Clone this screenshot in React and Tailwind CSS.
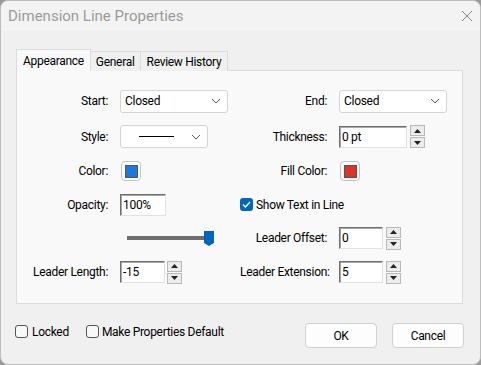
import React from "react";

const font = { fontFamily: 'Roboto, "Noto Sans", sans-serif' };
const T = "text-[12px] tracking-[-0.3px] text-black";

function Chevron() {
  return (
    <svg width="10" height="6" viewBox="0 0 10 6" className="shrink-0">
      <path d="M1 1 L5 5 L9 1" fill="none" stroke="#555" strokeWidth="1" />
    </svg>
  );
}

function Select({ w, children }) {
  return (
    <div className={`${w} h-[23px] bg-white border border-[#d4d4d4] rounded-[3px] flex items-center justify-between pl-[4px] pr-[6px]`}>
      <div className="flex-1 flex items-center">{children}</div>
      <Chevron />
    </div>
  );
}

function Input({ w, value }) {
  return (
    <div className={`${w} h-[22px] bg-white border border-t-[#6e6e6e] border-l-[#6e6e6e] border-r-[#e2e2e2] border-b-[#e2e2e2] shadow-[inset_1px_1px_0_#a8a8a8] flex items-center pl-[2px] ${T}`}>
      {value}
    </div>
  );
}

function Spinner() {
  return (
    <div className="w-[15px] h-[23px] flex flex-col gap-px">
      <div className="flex-1 bg-[#ececec] border border-[#b9b9b9] flex items-center justify-center">
        <svg width="7" height="4" viewBox="0 0 7 4"><path d="M3.5 0 L7 4 L0 4 Z" fill="#222" /></svg>
      </div>
      <div className="flex-1 bg-[#ececec] border border-[#b9b9b9] flex items-center justify-center">
        <svg width="7" height="4" viewBox="0 0 7 4"><path d="M0 0 L7 0 L3.5 4 Z" fill="#222" /></svg>
      </div>
    </div>
  );
}

function Swatch({ color }) {
  return (
    <div className="w-[20px] h-[20px] border border-[#c4c4c4] rounded-[4px] bg-[#fbfbfb] flex items-center justify-center">
      <div className="w-[13px] h-[13px] border border-[#555]" style={{ backgroundColor: color }} />
    </div>
  );
}

function Label({ children }) {
  return <div className={`text-right pr-3 whitespace-nowrap ${T}`}>{children}</div>;
}

function CheckBox({ checked }) {
  if (checked) {
    return (
      <div className="w-[13px] h-[13px] rounded-[3px] bg-[#0067c0] flex items-center justify-center">
        <svg width="9" height="7" viewBox="0 0 9 7"><path d="M1 3.5 L3.4 6 L8 1" fill="none" stroke="white" strokeWidth="1.3" /></svg>
      </div>
    );
  }
  return <div className="w-[13px] h-[13px] rounded-[3px] border border-[#555] bg-[#f8f8f8]" />;
}

export default function App() {
  return (
    <div className="w-[481px] h-[365px] bg-[#9a9a9a] overflow-hidden" style={font}>
      <div className="w-[481px] h-[365px] bg-[#f0f0f0] rounded-[8px] border border-[#bdbdbd] overflow-hidden flex flex-col">
        {/* Title bar */}
        <div className="h-[30px] bg-[#f3f3f3] flex items-center justify-between pl-[7px] pr-[7px] shrink-0">
          <div className="text-[15px] text-[#9b9b9b]">Dimension Line Properties</div>
          <svg width="12" height="12" viewBox="0 0 12 12"><path d="M1 1 L11 11 M11 1 L1 11" stroke="#8a8a8a" strokeWidth="1" /></svg>
        </div>

        {/* Tabs */}
        <div className="pl-[15px] pt-[18px] flex items-end relative z-10 h-[40px]">
          <div className={`h-[22px] px-[6px] bg-[#f9f9f9] border border-[#dcdcdc] border-b-0 flex items-center ${T}`}>Appearance</div>
          <div className={`h-[20px] px-[5px] bg-[#f0f0f0] border border-[#dcdcdc] border-l-0 border-b-0 flex items-center ${T}`}>General</div>
          <div className={`h-[20px] px-[6px] bg-[#f0f0f0] border border-[#dcdcdc] border-l-0 border-b-0 flex items-center ${T}`}>Review History</div>
        </div>

        {/* Panel */}
        <div className="ml-[15px] w-[447px] h-[234px] -mt-px border border-[#dcdcdc] bg-[#f9f9f9] pt-[12px]">
          <div className="grid grid-cols-[103px_120px_99px_1fr] grid-rows-[36px_35px_34px_33px_34px_34px] items-center">
            <Label>Start:</Label>
            <Select w="w-[108px]"><span className={T}>Closed</span></Select>
            <Label>End:</Label>
            <Select w="w-[108px]"><span className={T}>Closed</span></Select>

            <Label>Style:</Label>
            <Select w="w-[88px]"><div className="ml-[14px] w-[35px] h-px bg-black" /></Select>
            <Label>Thickness:</Label>
            <div className="flex items-center gap-[3px]">
              <Input w="w-[68px]" value="0 pt" />
              <Spinner />
            </div>

            <Label>Color:</Label>
            <div className="ml-px"><Swatch color="#1a78e0" /></div>
            <Label>Fill Color:</Label>
            <div className="ml-px"><Swatch color="#dc3526" /></div>

            <Label>Opacity:</Label>
            <Input w="w-[46px]" value="100%" />
            <div className="col-span-2 flex items-center gap-[3px]">
              <CheckBox checked />
              <span className={T}>Show Text in Line</span>
            </div>

            <div />
            <div className="ml-[7px]">
              <svg width="88" height="15" viewBox="0 0 88 15">
                <rect x="0" y="5" width="80" height="4" fill="#6f6f6f" />
                <path d="M77 0 H87 V12 L82 15 L77 12 Z" fill="#0067c0" />
              </svg>
            </div>
            <Label>Leader Offset:</Label>
            <div className="flex items-center gap-[3px]">
              <Input w="w-[44px]" value="0" />
              <Spinner />
            </div>

            <Label>Leader Length:</Label>
            <div className="flex items-center gap-[2px]">
              <Input w="w-[45px]" value="-15" />
              <Spinner />
            </div>
            <Label>Leader Extension:</Label>
            <div className="flex items-center gap-[3px]">
              <Input w="w-[44px]" value="5" />
              <Spinner />
            </div>
          </div>
        </div>

        {/* Bottom */}
        <div className="mt-[19px] flex items-start justify-between pl-[14px] pr-[16px]">
          <div className="flex items-center mt-[2px] h-[13px]">
            <CheckBox />
            <span className={`ml-[4px] ${T}`}>Locked</span>
            <div className="ml-[17px]"><CheckBox /></div>
            <span className={`ml-[3px] ${T}`}>Make Properties Default</span>
          </div>
          <div className="flex items-center gap-[15px]">
            <div className={`w-[72px] h-[25px] rounded-[4px] border border-[#d0d0d0] bg-[#fdfdfd] flex items-center justify-center ${T}`}>OK</div>
            <div className={`w-[72px] h-[25px] rounded-[4px] border border-[#d0d0d0] bg-[#fdfdfd] flex items-center justify-center ${T}`}>Cancel</div>
          </div>
        </div>
      </div>
    </div>
  );
}
